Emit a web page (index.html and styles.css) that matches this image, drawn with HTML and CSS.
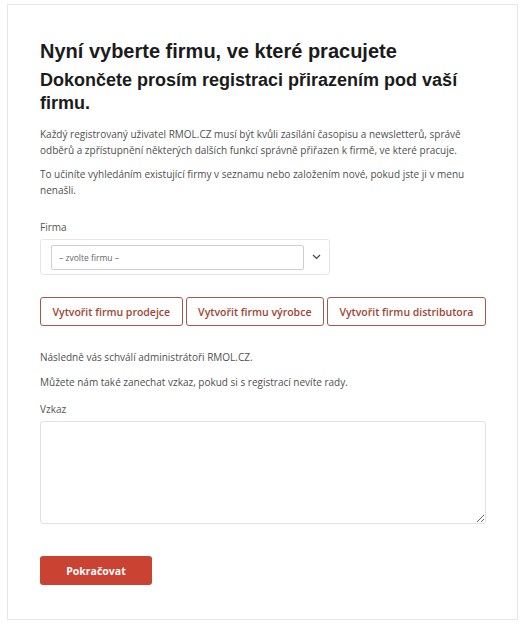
FILE: index.html
```html
<!DOCTYPE html>
<html lang="cs">
<head>
<meta charset="utf-8">
<link rel="stylesheet" href="styles.css">
</head>
<body>
<div class="card">
  <h1 class="title">Nyní vyberte firmu, ve které pracujete</h1>
  <h2 class="subtitle">Dokončete prosím registraci přirazením pod vaší firmu.</h2>
  <p class="text">Každý registrovaný uživatel RMOL.CZ musí být kvůli zasílání časopisu a newsletterů, správě odběrů a zpřístupnění některých dalších funkcí správně přiřazen k firmě, ve které pracuje.</p>
  <p class="text">To učiníte vyhledáním existující firmy v seznamu nebo založením nové, pokud jste ji v menu nenašli.</p>
  <div class="field">
    <label class="label">Firma</label>
    <div class="select">
      <div class="select-input">– zvolte firmu –</div>
      <svg class="chevron" width="9" height="6" viewBox="0 0 9 6"><path d="M1 1l3.5 3.5L8 1" fill="none" stroke="#444" stroke-width="1.2"/></svg>
    </div>
  </div>
  <div class="actions">
    <button class="btn-outline">Vytvořit firmu prodejce</button>
    <button class="btn-outline">Vytvořit firmu výrobce</button>
    <button class="btn-outline">Vytvořit firmu distributora</button>
  </div>
  <p class="text note">Následně vás schválí administrátoři RMOL.CZ.</p>
  <p class="text">Můžete nám také zanechat vzkaz, pokud si s registrací nevíte rady.</p>
  <div class="field field-tight">
    <label class="label">Vzkaz</label>
    <textarea class="message"></textarea>
  </div>
  <button class="btn-primary">Pokračovat</button>
</div>
</body>
</html>
```
FILE: styles.css
```css
html, body { margin: 0; padding: 0; background: #fff; }
body { font-family: "Open Sans", "DejaVu Sans", sans-serif; }
.card {
  box-sizing: border-box;
  width: 511px;
  height: 616px;
  margin: 4px 0 0 7px;
  border: 1px solid #e6e6e6;
  padding: 34px 32px 0 32px;
}
.title {
  font-family: "Liberation Sans", Arial, sans-serif;
  font-weight: bold;
  font-size: 20px;
  line-height: 24px;
  color: #1b1b1b;
  margin: 0 0 6px;
}
.subtitle {
  font-family: "Liberation Sans", Arial, sans-serif;
  font-weight: bold;
  font-size: 18px;
  line-height: 23px;
  color: #1b1b1b;
  margin: 0 0 11px;
}
.text {
  font-size: 10px;
  line-height: 16px;
  color: #4f4f4f;
  margin: 0 0 8px;
}
.field { margin-top: 22px; }
.field-tight { margin-top: 12px; }
.label {
  display: block;
  font-size: 10px;
  line-height: 14px;
  color: #555;
  margin-bottom: 5px;
}
.select {
  box-sizing: border-box;
  width: 290px;
  height: 36px;
  border: 1px solid #e6e6e6;
  border-radius: 3px;
  display: flex;
  align-items: center;
  padding: 0 8px 0 10px;
  gap: 8px;
}
.select-input {
  box-sizing: border-box;
  flex: 1;
  height: 25px;
  border: 1px solid #cfcfcf;
  border-radius: 2px;
  font-size: 8.5px;
  line-height: 23px;
  padding-left: 7px;
  color: #666;
}
.chevron { flex: none; }
.actions {
  display: flex;
  gap: 3px;
  margin-top: 22px;
  margin-bottom: 23px;
}
.btn-outline {
  flex: none;
  white-space: nowrap;
  font-family: "Open Sans", "DejaVu Sans", sans-serif;
  font-weight: 600;
  font-size: 10.5px;
  color: #9e4535;
  background: #fff;
  border: 1px solid #a5584a;
  border-radius: 3px;
  height: 29px;
  padding: 0 11.5px;
}
.note { margin-bottom: 9px; }
.message {
  display: block;
  box-sizing: border-box;
  width: 446px;
  height: 103px;
  border: 1px solid #e2e2e2;
  border-radius: 3px;
  margin: 0;
}
.btn-primary {
  margin-top: 32px;
  width: 112px;
  height: 29px;
  background: #c94232;
  color: #fff;
  border: none;
  border-radius: 3px;
  font-family: "Open Sans", "DejaVu Sans", sans-serif;
  font-weight: 700;
  font-size: 10.5px;
}
```
